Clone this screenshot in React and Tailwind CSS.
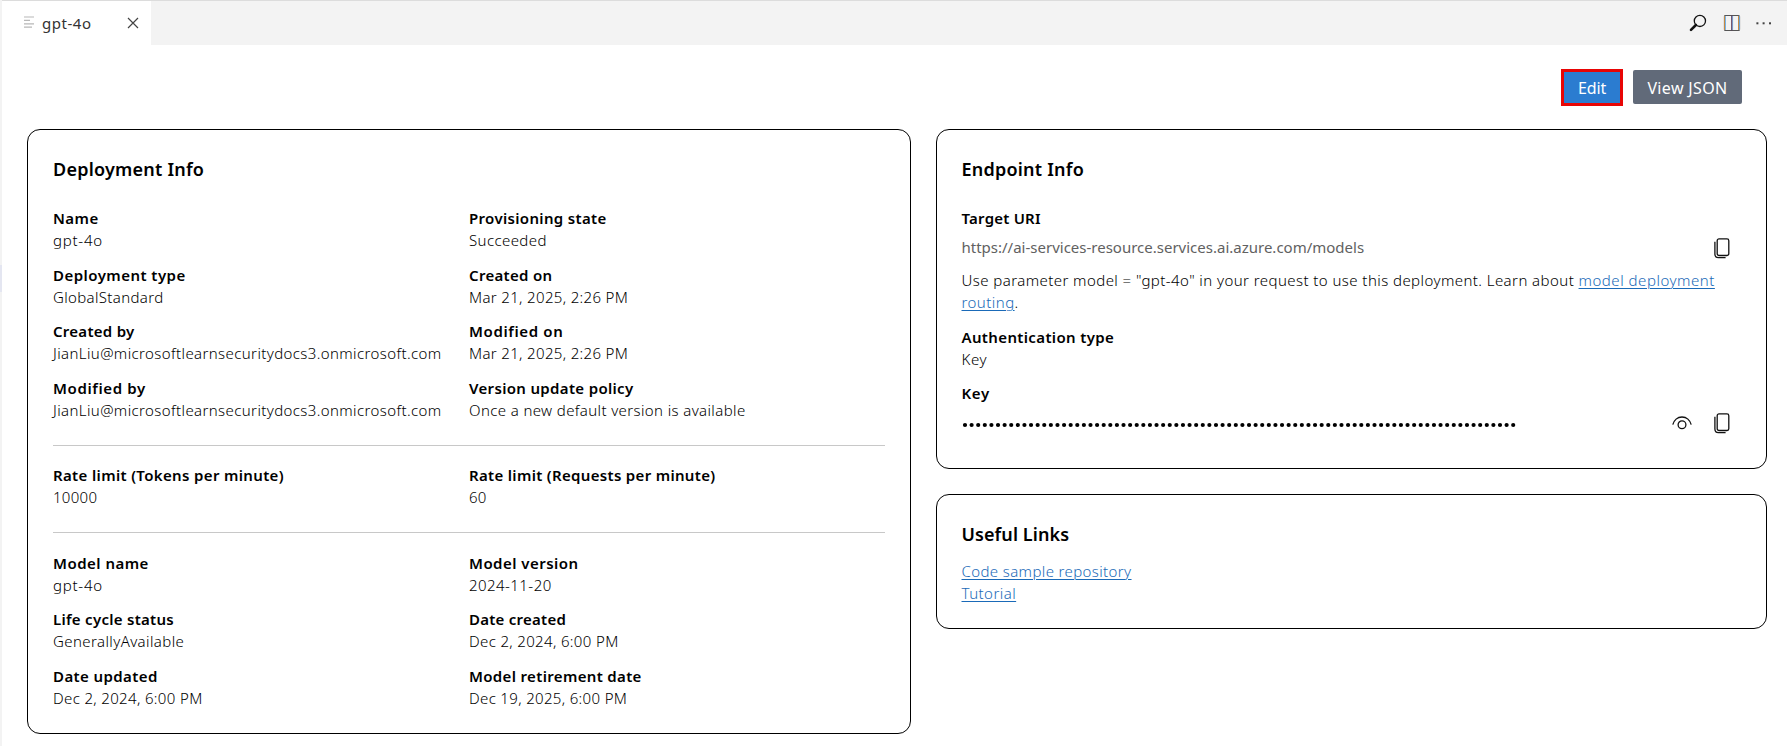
import React from 'react';

const overview = [
  ['Name', 'gpt-4o', 'tracking-[0.45px]', 'tracking-[0.75px]'],
  ['Provisioning state', 'Succeeded', 'tracking-[0.34px]', 'tracking-[0.4px]'],
  ['Deployment type', 'GlobalStandard', 'tracking-[0.46px]', 'tracking-[0.35px]'],
  ['Created on', 'Mar 21, 2025, 2:26 PM', 'tracking-[0.31px]', 'tracking-[0.34px]'],
  ['Created by', 'JianLiu@microsoftlearnsecuritydocs3.onmicrosoft.com', 'tracking-[0.27px]', 'tracking-[0.39px]'],
  ['Modified on', 'Mar 21, 2025, 2:26 PM', 'tracking-[0.62px]', 'tracking-[0.34px]'],
  ['Modified by', 'JianLiu@microsoftlearnsecuritydocs3.onmicrosoft.com', 'tracking-[0.62px]', 'tracking-[0.39px]'],
  ['Version update policy', 'Once a new default version is available', 'tracking-[0.33px]', 'tracking-[0.38px]'],
];

const limits = [
  ['Rate limit (Tokens per minute)', '10000', 'tracking-[0.35px]', 'tracking-[0.3px]'],
  ['Rate limit (Requests per minute)', '60', 'tracking-[0.32px]', 'tracking-[0.3px]'],
];

const model = [
  ['Model name', 'gpt-4o', 'tracking-[0.48px]', 'tracking-[0.75px]'],
  ['Model version', '2024-11-20', 'tracking-[0.46px]', 'tracking-[0.45px]'],
  ['Life cycle status', 'GenerallyAvailable', 'tracking-[0.28px]', 'tracking-[0.4px]'],
  ['Date created', 'Dec 2, 2024, 6:00 PM', 'tracking-[0.25px]', 'tracking-[0.35px]'],
  ['Date updated', 'Dec 2, 2024, 6:00 PM', 'tracking-[0.4px]', 'tracking-[0.35px]'],
  ['Model retirement date', 'Dec 19, 2025, 6:00 PM', 'tracking-[0.34px]', 'tracking-[0.34px]'],
];

const LINK = 'text-[#1a6ab8] underline decoration-1 underline-offset-2';

function Card({ title, tracking, className, children }) {
  return (
    <section className={`rounded-[13px] border border-black bg-white pt-[27px] pr-[25px] ${className}`}>
      <h2 className={`text-[18px] leading-6 font-semibold ${tracking}`}>{title}</h2>
      {children}
    </section>
  );
}

function Field({ label, value, lt, vt }) {
  return (
    <div className="whitespace-nowrap">
      <div className={`font-semibold ${lt}`}>{label}</div>
      <div className={vt}>{value}</div>
    </div>
  );
}

function FieldGrid({ items, className }) {
  return (
    <div className={`grid grid-cols-2 gap-y-[12.5px] ${className}`}>
      {items.map(([label, value, lt, vt]) => (
        <Field key={label} label={label} value={value} lt={lt} vt={vt} />
      ))}
    </div>
  );
}

function CopyIcon() {
  return (
    <svg width="16" height="21" viewBox="0 0 16 21" className="-mt-[2px]" fill="none" stroke="#111" strokeWidth="1.3">
      <rect x="3.2" y="0.9" width="11.6" height="16.6" rx="1.8" />
      <path d="M0.9 3.8v12.2c0 2.2 1.3 3.6 3.5 3.6h7.2" />
    </svg>
  );
}

function EyeIcon() {
  return (
    <svg width="20" height="14" viewBox="0 0 20 14" className="-mt-[2px]" fill="none" stroke="#111" strokeWidth="1.3">
      <path d="M0.8 8.6C1.9 4.4 5.4 1 10 1s8.1 3.400 9.200 7.600" />
      <circle cx="10" cy="8.700" r="3.900" />
    </svg>
  );
}

export default function App() {
  return (
    <div className="flex h-[746px] w-[1787px] overflow-hidden bg-white font-['Noto_Sans','Open_Sans',sans-serif] text-[15px] leading-[22px] font-light text-black">
      <div className="w-[2px] shrink-0 bg-[#f3f3f3] pt-[265px]">
        <div className="h-[27px] bg-[#e4e6f1]" />
      </div>
      <div className="flex min-w-0 grow flex-col">
        <header className="flex h-[45px] items-stretch border-t border-[#dcdcdc] bg-[#f3f3f3]">
          <div className="flex w-[149px] items-center bg-white pl-[22px] font-normal text-[#333]">
            <svg width="10" height="12" viewBox="0 0 10 12" className="-mt-[2px]" stroke="#b8b8b8" strokeWidth="1.2">
              <path d="M0 1h10M0 4.400h6M0 7.800h10M0 11.200h8" />
            </svg>
            <span className="ml-[8px] tracking-[0.54px]">gpt-4o</span>
            <svg width="12" height="12" viewBox="0 0 12 12" className="ml-[35.500px]" stroke="#444" strokeWidth="1.2">
              <path d="M1 1l10 10M11 1L1 11" />
            </svg>
          </div>
          <div className="ml-auto flex items-center pr-[14px]">
            <svg width="18" height="18" viewBox="0 0 18 18" fill="none" stroke="#111">
              <circle cx="10.900" cy="6.900" r="5.600" strokeWidth="1.300" />
              <path d="M6.900 11L2 15.900" strokeWidth="2.600" strokeLinecap="round" />
            </svg>
            <svg width="18" height="18" viewBox="0 0 18 18" fill="none" className="ml-[16px]">
              <rect x="1.500" y="1.500" width="15" height="15" rx="1" stroke="#555" strokeWidth="1.200" />
              <path d="M1.500 2v14M15.500 2v14" stroke="#c58a45" />
              <path d="M2.500 2v14M16.500 2v14M9.600 2v14" stroke="#6aaee8" strokeWidth="0.900" />
              <path d="M8.700 1.500v15" stroke="#5c3a5c" strokeWidth="1.100" />
            </svg>
            <svg width="18" height="18" viewBox="0 0 18 18" className="ml-[14px]" fill="#424242">
              <rect x="1.400" y="8.300" width="2" height="2" />
              <rect x="7.600" y="8.300" width="2" height="2" />
              <rect x="14" y="8.300" width="2" height="2" />
            </svg>
          </div>
        </header>

        <div className="flex h-[84px] items-start justify-end gap-[10px] pt-6 pr-[45px] text-[16px] font-normal text-white">
          <button className="h-[37px] w-[62px] border-[3px] border-[#e80505] bg-[#2b7cd0] tracking-[-0.1px]">Edit</button>
          <button className="mt-px h-[34px] w-[109px] rounded-[2px] bg-[#616a79] pt-px tracking-[0.35px]">View JSON</button>
        </div>

        <main className="flex items-start gap-[25px] pl-[25px]">
          <Card title="Deployment Info" tracking="tracking-[0.22px]" className="h-[605px] w-[884px] pl-[25px]">
            <FieldGrid items={overview} className="mt-[26px]" />
            <hr className="mt-[24.5px] border-t border-[#c8c8c8]" />
            <FieldGrid items={limits} className="mt-[18px]" />
            <hr className="mt-6 border-t border-[#c8c8c8]" />
            <FieldGrid items={model} className="mt-[18.750px]" />
          </Card>

          <div className="flex w-[831px] flex-col gap-[25px]">
            <Card title="Endpoint Info" tracking="tracking-[0.22px]" className="h-[340px] pl-[24.500px]">
              <div className="mt-[26px] font-semibold tracking-[0.22px]">Target URI</div>
              <div className="flex h-10 items-center justify-between pr-[11px]">
                <span className="-mt-[4px] font-normal text-[#616161]">
                  https://ai-services-resource.services.ai.azure.com/models
                </span>
                <CopyIcon />
              </div>
              <div className="whitespace-nowrap">
                <span className="tracking-[0.43px]">
                  Use parameter model = "gpt-4o" in your request to use this deployment. Learn about{' '}
                </span>
                <a className={`${LINK} tracking-[0.52px]`}>model deployment</a>
                <br />
                <a className={`${LINK} tracking-[0.45px]`}>routing</a>.
              </div>
              <div className="mt-[13px]">
                <Field label="Authentication type" value="Key" lt="tracking-[0.36px]" vt="tracking-[0.55px]" />
              </div>
              <div className="mt-[12px] font-semibold tracking-[0.6px]">Key</div>
              <div className="flex h-10 items-center pr-[11px]">
                <svg width="556" height="6" viewBox="0 0 556 6" className="mt-[2px]">
                  <line x1="3" y1="3" x2="551.700" y2="3" stroke="#000" strokeWidth="4.200" strokeLinecap="round" strokeDasharray="0 6.605" />
                </svg>
                <div className="ml-auto flex items-center gap-[22px]">
                  <EyeIcon />
                  <CopyIcon />
                </div>
              </div>
            </Card>

            <Card title="Useful Links" tracking="tracking-[0.08px]" className="h-[135px] pl-[24.500px]">
              <div className="mt-[14px] flex flex-col items-start">
                <a className={`${LINK} tracking-[0.38px]`}>Code sample repository</a>
                <a className={`${LINK} tracking-[0.45px]`}>Tutorial</a>
              </div>
            </Card>
          </div>
        </main>
      </div>
    </div>
  );
}
